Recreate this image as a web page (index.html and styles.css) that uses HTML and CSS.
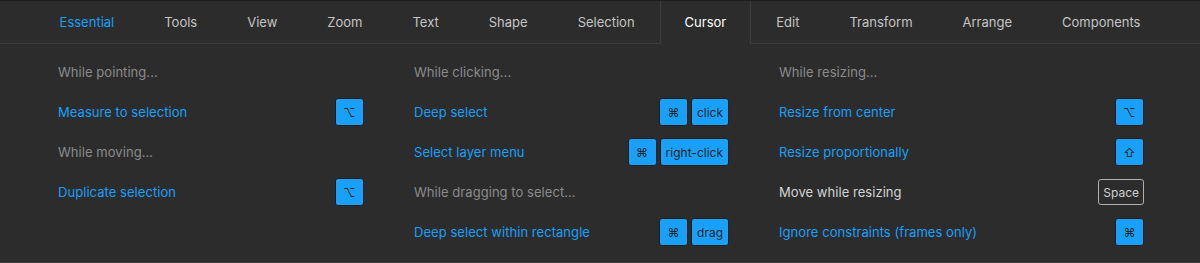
FILE: index.html
```html
<!DOCTYPE html>
<html lang="en">

<head>
    <meta charset="UTF-8">
    <title>Keyboard Shortcuts</title>
    <link rel="stylesheet" href="styles.css">
</head>

<body>
    <nav class="tabs">
        <div class="tab highlight">Essential</div>
        <div class="tab">Tools</div>
        <div class="tab">View</div>
        <div class="tab">Zoom</div>
        <div class="tab">Text</div>
        <div class="tab">Shape</div>
        <div class="tab">Selection</div>
        <div class="tab active">Cursor</div>
        <div class="tab">Edit</div>
        <div class="tab">Transform</div>
        <div class="tab">Arrange</div>
        <div class="tab">Components</div>
    </nav>

    <div class="shortcuts">
        <div class="column col-one">
            <div class="row"><span class="heading">While pointing...</span></div>
            <div class="row">
                <span class="action">Measure to selection</span>
                <span class="keys"><kbd class="key">⌥</kbd></span>
            </div>
            <div class="row"><span class="heading">While moving...</span></div>
            <div class="row">
                <span class="action">Duplicate selection</span>
                <span class="keys"><kbd class="key">⌥</kbd></span>
            </div>
        </div>

        <div class="column col-two">
            <div class="row"><span class="heading">While clicking...</span></div>
            <div class="row">
                <span class="action">Deep select</span>
                <span class="keys"><kbd class="key">⌘</kbd><kbd class="key word">click</kbd></span>
            </div>
            <div class="row">
                <span class="action">Select layer menu</span>
                <span class="keys"><kbd class="key">⌘</kbd><kbd class="key word">right-click</kbd></span>
            </div>
            <div class="row"><span class="heading">While dragging to select...</span></div>
            <div class="row">
                <span class="action">Deep select within rectangle</span>
                <span class="keys"><kbd class="key">⌘</kbd><kbd class="key word">drag</kbd></span>
            </div>
        </div>

        <div class="column col-three">
            <div class="row"><span class="heading">While resizing...</span></div>
            <div class="row">
                <span class="action">Resize from center</span>
                <span class="keys"><kbd class="key">⌥</kbd></span>
            </div>
            <div class="row">
                <span class="action">Resize proportionally</span>
                <span class="keys"><kbd class="key">⇧</kbd></span>
            </div>
            <div class="row">
                <span class="action off">Move while resizing</span>
                <span class="keys"><kbd class="key word ghost">Space</kbd></span>
            </div>
            <div class="row">
                <span class="action">Ignore constraints (frames only)</span>
                <span class="keys"><kbd class="key">⌘</kbd></span>
            </div>
        </div>
    </div>
</body>

</html>
```

FILE: styles.css
```css
body {
    margin: 0;
    padding: 0;
    height: 263px;
    box-sizing: border-box;
    font-family: 'Inter', 'Noto Sans', sans-serif;
    font-size: 13px;
    color: #c7c7c7;
    background: #2c2c2c;
    border-top: 1px solid #1c1c1c;
    border-bottom: 1px solid #3a3a3a;
}

.tabs {
    display: flex;
    justify-content: center;
    height: 42px;
    border-bottom: 1px solid #3c3c3c;
}

.tab {
    padding: 0 24px;
    line-height: 42px;
    border-left: 1px solid transparent;
    border-right: 1px solid transparent;
    color: #c4c4c4;
    white-space: nowrap;
}

.tab.highlight {
    color: #18a0fb;
}

.tab.active {
    color: #ffffff;
    border-left-color: #3c3c3c;
    border-right-color: #3c3c3c;
    height: 43px;
    margin-bottom: -1px;
    background: #2c2c2c;
}

.shortcuts {
    display: grid;
    grid-template-columns: 306px 315px 365px;
    column-gap: 50px;
    padding: 8px 0 0 58px;
    letter-spacing: 0.05px;
}

.row {
    display: flex;
    align-items: center;
    justify-content: space-between;
    height: 40px;
}

.heading {
    color: #8b8b8b;
}

.action {
    color: #18a0fb;
}

.action.off {
    color: #d4d4d4;
}

.keys {
    display: flex;
    gap: 3px;
}

.key {
    display: flex;
    align-items: center;
    justify-content: center;
    min-width: 29px;
    height: 28px;
    box-sizing: border-box;
    padding: 0 5px;
    border: 1px solid #1f1f1f;
    border-radius: 3px;
    background: #18a0fb;
    color: #262626;
    font-family: 'Inter', 'DejaVu Sans', sans-serif;
    font-size: 12px;
    letter-spacing: 0;
}

.key.ghost {
    background: transparent;
    border-color: #b0b0b0;
    color: #d0d0d0;
    height: 26px;
    padding: 0 4px;
}
```
